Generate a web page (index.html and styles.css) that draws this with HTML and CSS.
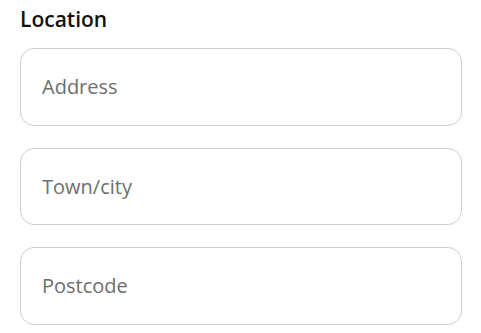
FILE: index.html
```html
<!DOCTYPE html>
<html lang="en">
<head>
    <meta charset="UTF-8">
    <meta name="viewport" content="width=device-width, initial-scale=1.0">
    <title>Location</title>
    <link rel="stylesheet" href="styles.css">
</head>
<body>
    <form class="form">
        <p class="title">Location</p>
        <div class="fields">
            <input class="input" type="text" placeholder="Address">
            <input class="input" type="text" placeholder="Town/city">
            <input class="input" type="text" placeholder="Postcode">
        </div>
    </form>
</body>
</html>
```

FILE: styles.css
```css
body {
    margin: 0;
    background-color: #fff;
    font-family: "Open Sans", "Noto Sans", sans-serif;
}
.form {
    display: flex;
    flex-direction: column;
    width: 442px;
    padding: 5px 20px 0 20px;
}
.title {
    margin: 0 0 15px 0;
    font-size: 21px;
    line-height: 28px;
    font-weight: 600;
    color: #111;
}
.fields {
    display: flex;
    flex-direction: column;
    gap: 22px;
}
.input {
    box-sizing: border-box;
    width: 100%;
    height: 77.5px;
    padding: 0 21px;
    border: 1px solid #cfcfcf;
    border-radius: 14px;
    background-color: #fff;
    font-family: inherit;
    font-size: 20px;
    color: #222;
    outline: 0;
}
.input::placeholder {
    color: #6e6e6e;
}
```
